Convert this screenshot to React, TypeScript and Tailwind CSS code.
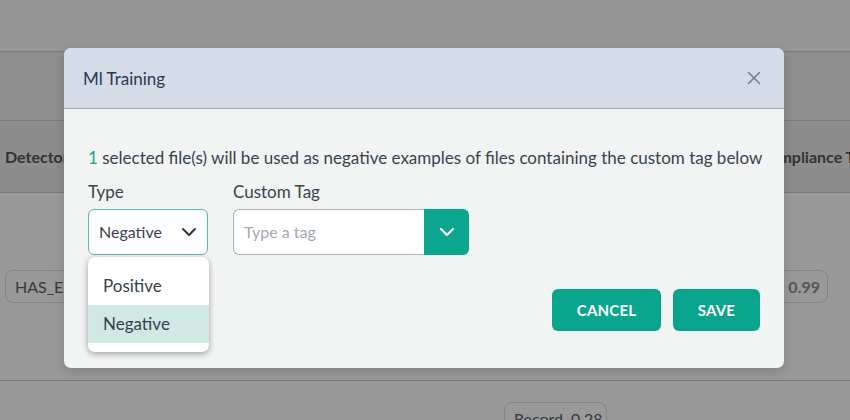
import React from "react";

const font = { fontFamily: "Lato, 'Noto Sans', sans-serif" };

function Chevron({ className = "", color = "currentColor", w = 2 }: { className?: string; color?: string; w?: number }) {
  return (
    <svg viewBox="0 0 24 24" className={className} fill="none" stroke={color} strokeWidth={w} strokeLinecap="round" strokeLinejoin="round">
      <path d="M6 9l6 6 6-6" />
    </svg>
  );
}

export default function App() {
  return (
    <div className="relative w-[850px] h-[420px] overflow-hidden bg-[#999999]" style={font}>
      {/* background page (dimmed) */}
      <div className="flex flex-col">
        <div className="h-[52px] bg-[#959595] border-b border-[#7b7b7b]" />
        <div className="h-[69px] bg-[#8e8e8e] border-b border-[#7b7b7b]" />
        <div className="h-[72px] bg-[#8d8d8d] border-b border-[#7b7b7b] flex items-center justify-between pl-[5px] pr-0">
          <span className="text-[16px] font-bold text-[#2f3337]">Detector</span>
          <span className="text-[16px] font-bold text-[#2f3337] whitespace-nowrap mr-[-20px]">Compliance Tag</span>
        </div>
        <div className="h-[188px] border-b border-[#7b7b7b] flex items-start justify-between pl-[5px] pr-[22px] pt-[77px]">
          <div className="h-[33px] px-[9px] flex items-center rounded-[8px] border border-[#838383] text-[16px] text-[#343a40]">HAS_EMAIL</div>
          <div className="h-[33px] pl-[9px] pr-[7px] flex items-center gap-2 rounded-[8px] border border-[#838383] text-[16px] text-[#50565c] font-bold">
            <span className="font-normal">EMAIL</span>0.99
          </div>
        </div>
        <div className="pl-[504px] pt-[21px]">
          <div className="w-[103px] h-[33px] px-[9px] flex items-center gap-2 rounded-[8px] border border-[#838383] text-[16px] text-[#343a40]">
            Record <span>0.28</span>
          </div>
        </div>
      </div>

      {/* modal */}
      <div className="absolute left-[64px] top-[48px] w-[720px] h-[320px] rounded-[7px] bg-[#f2f4f3] flex flex-col shadow-[0_4px_12px_rgba(0,0,0,0.15)]">
        <div className="h-[61px] shrink-0 rounded-t-[7px] bg-[#d4dce8] border-b border-[#9aa6bf] flex items-center justify-between pl-[19px] pr-[23px]">
          <span className="text-[17px] text-[#2b3850] pt-[2px]">Ml Training</span>
          <svg viewBox="0 0 14 14" className="w-[14px] h-[14px]" fill="none" stroke="#6f8199" strokeWidth="1.6" strokeLinecap="round">
            <path d="M1.5 1.5l11 11M12.5 1.5l-11 11" />
          </svg>
        </div>
        <div className="flex-1 flex flex-col pl-[24px] pr-[20px] pt-[38px]">
          <p className="text-[17px] leading-[22px] text-[#39424f] whitespace-nowrap">
            <span className="text-[#17a08a]">1</span> selected file(s) will be used as negative examples of files containing the custom tag below
          </p>
          <div className="flex gap-[25px] mt-[12px]">
            <div className="flex flex-col relative">
              <span className="text-[17px] leading-[22px] text-[#39424f]">Type</span>
              <div className="mt-[6px] w-[120px] h-[46px] rounded-[6px] border border-[#5cb8a8] bg-white flex items-center justify-between pl-[10px] pr-[6px]">
                <span className="text-[16px] text-[#39424f]">Negative</span>
                <Chevron className="w-[24px] h-[24px]" color="#2d3644" w={2} />
              </div>
              <div className="absolute left-0 top-[76px] w-[121px] h-[95px] rounded-[7px] bg-white shadow-[0_2px_6px_rgba(0,0,0,0.35)] flex flex-col py-[10px] z-10">
                <div className="h-[38px] shrink-0 flex items-center pl-[15px] text-[17px] text-[#36404d]">Positive</div>
                <div className="h-[38px] shrink-0 flex items-center pl-[15px] text-[17px] text-[#36404d] bg-[#d0e9e4]">Negative</div>
              </div>
            </div>
            <div className="flex flex-col">
              <span className="text-[17px] leading-[22px] text-[#39424f]">Custom Tag</span>
              <div className="mt-[6px] flex h-[46px]">
                <div className="w-[191px] h-full rounded-l-[6px] border border-[#a9b3bd] border-r-0 bg-white flex items-center pl-[10px] text-[16px] text-[#a2a9b1]">
                  Type a tag
                </div>
                <div className="w-[45px] h-full rounded-r-[6px] bg-[#0ca58d] flex items-center justify-center">
                  <Chevron className="w-[24px] h-[24px]" color="#ffffff" w={2.2} />
                </div>
              </div>
            </div>
          </div>
          <div className="flex justify-end gap-[12px] mt-[34px] pr-[4px]">
            <button className="w-[109px] h-[42px] rounded-[6px] bg-[#08a58c] text-white font-bold text-[15px] tracking-[0.2px]">CANCEL</button>
            <button className="w-[87px] h-[42px] rounded-[6px] bg-[#08a58c] text-white font-bold text-[15px] tracking-[0.2px]">SAVE</button>
          </div>
        </div>
      </div>
    </div>
  );
}
